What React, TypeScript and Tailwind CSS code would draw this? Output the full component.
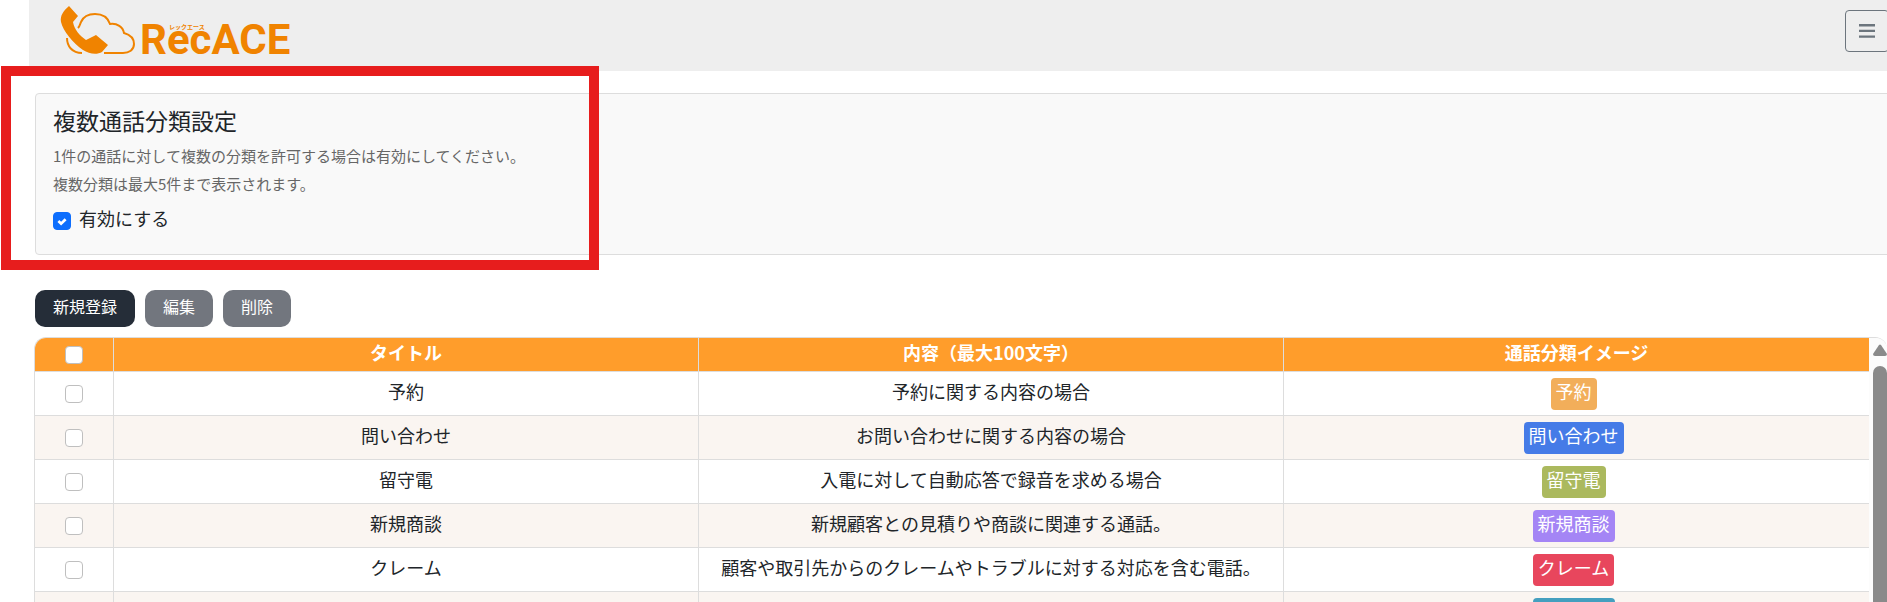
import { useState } from 'react'

const CATEGORIES = [
  { title: '予約', description: '予約に関する内容の場合', badge: 'bg-[#f2ae5a]' },
  { title: '問い合わせ', description: 'お問い合わせに関する内容の場合', badge: 'bg-[#457be7]' },
  { title: '留守電', description: '入電に対して自動応答で録音を求める場合', badge: 'bg-[#abb95e]' },
  { title: '新規商談', description: '新規顧客との見積りや商談に関連する通話。', badge: 'bg-[#a485f5]' },
  { title: 'クレーム', description: '顧客や取引先からのクレームやトラブルに対する対応を含む電話。', badge: 'bg-[#e8465d]' },
  { title: 'サポート', description: '製品やサービスの使い方に関するサポート。', badge: 'bg-[#449fbf]' },
]

const CHECKBOX =
  'block mx-auto size-[18px] appearance-none rounded border border-[#bfbfbf] bg-white checked:border-[#0d6efd] checked:bg-[#0d6efd]'

function Logo() {
  return (
    <a href="#" aria-label="RecACE" className="block">
      <svg width="240" height="60" viewBox="0 0 240 60" fill="none">
        <path
          d="M18 22C20 20 20 18 21 16C24 9 30 8 35 8C43 8 48 12 50 18C57 17 63 21 64 27C71 29 74 33 74 38C74 44 69 47 63 47H44"
          stroke="#f08300"
          strokeWidth="2"
        />
        <path d="M7 32C7 40 12 47 22 47" stroke="#f08300" strokeWidth="2" />
        <path
          d="M9 0L18 10L13 16C14 23 20 30 26 34L36 29L48 39L42 46C37 49 29 48 23 44C13 37 3 25 1 16C0 10 3 5 9 0Z"
          fill="#f08300"
        />
        <text x="80" y="48" fill="#f08300" fontFamily="Roboto" fontWeight="700" fontSize="42">RecACE</text>
        <text x="109" y="23" fill="#f08300" fontFamily="Noto Sans CJK JP" fontWeight="700" fontSize="6">レックエース</text>
      </svg>
    </a>
  )
}

function Header() {
  return (
    <header className="-mr-0.5 ml-[29px] flex h-[71px] items-start justify-between bg-[#eee]">
      <div className="pt-1.5 pl-[31px]">
        <Logo />
      </div>
      <button
        type="button"
        aria-label="メニュー"
        className="mt-2.5 flex h-[42px] w-11 items-center justify-center rounded border border-[#6c757d] text-[#6c757d]"
      >
        <svg width="16" height="14" viewBox="0 0 16 14" fill="currentColor">
          <path d="M0 0h16v2.4H0zM0 5.7h16v2.4H0zM0 11.4h16v2.4H0z" />
        </svg>
      </button>
    </header>
  )
}

function MultiCategorySetting() {
  const [enabled, setEnabled] = useState(true)

  return (
    <section className="mt-[22px] -mr-2 ml-[35px] rounded border border-[#ddd] bg-[#f9f9f9] px-[17px] pt-2.5 pb-5">
      <h2 className="text-[23px] leading-8">複数通話分類設定</h2>
      <p className="mt-1.5 text-[15px] leading-7 text-[#666]">
        1件の通話に対して複数の分類を許可する場合は有効にしてください。
        <br />
        複数分類は最大5件まで表示されます。
      </p>
      <label className="mt-1 flex items-center gap-2 text-lg leading-8">
        <span className="relative mt-1.5 size-[18px]">
          <input
            type="checkbox"
            checked={enabled}
            onChange={(e) => setEnabled(e.target.checked)}
            className={CHECKBOX}
          />
          {enabled && (
            <svg className="pointer-events-none absolute inset-0" width="18" height="18" viewBox="0 0 20 20" fill="none">
              <path d="M6 10l3 3 5-5" stroke="#fff" strokeWidth="3" />
            </svg>
          )}
        </span>
        有効にする
      </label>
    </section>
  )
}

function Actions() {
  return (
    <div className="mt-[35px] ml-[35px] flex gap-2.5 text-base text-white">
      <button type="button" className="h-[37px] rounded-[10px] bg-[#252d38] px-[18px] pb-1.5">新規登録</button>
      <button type="button" className="h-[37px] rounded-[10px] bg-[#72767e] px-[18px] pb-1.5">編集</button>
      <button type="button" className="h-[37px] rounded-[10px] bg-[#72767e] px-[18px] pb-1.5">削除</button>
    </div>
  )
}

function CategoryTable() {
  return (
    <div className="mt-2.5 ml-[34px] flex overflow-hidden rounded-t-xl border-t border-l border-[#ddd]">
      <div className="flex-1">
        <table className="w-full table-fixed border-separate border-spacing-0 text-center text-lg">
          <thead className="bg-[#ff9d2b] text-white">
            <tr className="h-[34px]">
              <th className="w-[79px] border-r border-b border-[#ddd]">
                <input type="checkbox" aria-label="すべて選択" className={CHECKBOX} />
              </th>
              <th className="border-r border-b border-[#ddd] pb-1.5 leading-6">タイトル</th>
              <th className="border-r border-b border-[#ddd] pb-1.5 leading-6">内容（最大100文字）</th>
              <th className="border-b border-[#ddd] pb-1.5 leading-6">通話分類イメージ</th>
            </tr>
          </thead>
          <tbody>
            {CATEGORIES.map((category) => (
              <tr key={category.title} className="h-11 even:bg-[#faf5f1]">
                <td className="border-r border-b border-[#ddd]">
                  <input type="checkbox" aria-label={category.title} className={CHECKBOX} />
                </td>
                <td className="border-r border-b border-[#ddd] pb-1.5 leading-6">{category.title}</td>
                <td className="border-r border-b border-[#ddd] pb-1.5 leading-6">{category.description}</td>
                <td className="border-b border-[#ddd] pr-1.5">
                  <span className={`inline-block h-8 rounded px-[5px] align-middle leading-[26px] text-white ${category.badge}`}>
                    {category.title}
                  </span>
                </td>
              </tr>
            ))}
          </tbody>
        </table>
      </div>
      <div className="flex w-[18px] flex-col items-center gap-2.5 bg-[#fcfcfc] pt-1.5 pl-1">
        <svg width="14" height="12" viewBox="0 0 14 12" fill="#8a8a8a">
          <path d="M6 1Q7 0 8 1L14 10Q14 12 12 12H2Q0 12 0 10Z" />
        </svg>
        <div className="w-3.5 flex-1 rounded-t-full bg-[#8a8a8a]" />
      </div>
    </div>
  )
}

export default function App() {
  return (
    <div className="relative h-screen overflow-hidden bg-white font-['Noto_Sans_CJK_JP',sans-serif] text-[#212529]">
      <Header />
      <MultiCategorySetting />
      <Actions />
      <CategoryTable />
      {/* highlight frame over the setting card */}
      <div className="pointer-events-none absolute top-[66px] left-px h-[204px] w-[598px] border-10 border-[#e71d1d]" />
    </div>
  )
}
